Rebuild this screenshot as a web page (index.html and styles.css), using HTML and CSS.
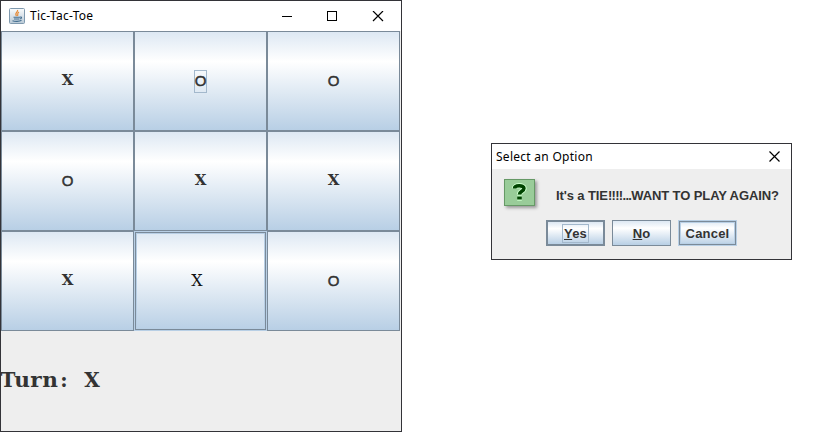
FILE: index.html
```html
<!DOCTYPE html>
<html lang="en">
<head>
<meta charset="utf-8">
<title>Tic-Tac-Toe</title>
<link rel="stylesheet" href="styles.css">
</head>
<body>
<main class="desktop">
  <section class="window game">
    <header class="titlebar">
      <svg class="java" width="16" height="16" viewBox="0 0 16 16">
        <defs><linearGradient id="jg" x2="0" y2="1"><stop stop-color="#fafcfd"/><stop offset="1" stop-color="#b9c9d6"/></linearGradient></defs>
        <rect x=".5" y=".5" width="15" height="15" rx="1" fill="url(#jg)" stroke="#7f99ae"/>
        <path d="M8.500 2C9.500 4 5 5 7.500 8M10 4C7.500 5.500 9.500 6 8.500 8" fill="none" stroke="#e78a35" stroke-width="1.200"/>
        <path d="M4.500 9.300h6M5 11h5M10.500 9.300c3-1 2.500 1.500 0 1.700M3.500 12.700c2 1 7 1 9-.4" fill="none" stroke="#456f90" stroke-width="1.100"/>
      </svg>
      <h1 class="title">Tic-Tac-Toe</h1>
      <svg class="controls" width="102" height="11" viewBox="0 0 102 11" fill="none" stroke="#000" shape-rendering="crispEdges">
        <path d="M0 5.500h10M45.500 .5h9v9h-9z"/>
        <path d="M91 0l10 10M101 0l-10 10" stroke-width="1.200" shape-rendering="auto"/>
      </svg>
    </header>
    <div class="board">
      <button class="cell"><span>X</span></button>
      <button class="cell"><span class="mark-o focus">O</span></button>
      <button class="cell"><span class="mark-o">O</span></button>
      <button class="cell"><span class="mark-o">O</span></button>
      <button class="cell"><span>X</span></button>
      <button class="cell"><span>X</span></button>
      <button class="cell"><span>X</span></button>
      <button class="cell hover"><span>X</span></button>
      <button class="cell"><span class="mark-o">O</span></button>
    </div>
    <p class="turn"><span>T</span><span class="low">u</span><span class="low">r</span><span class="low">n</span><span>:</span><span> </span><span>X</span></p>
  </section>
  <section class="window dialog">
    <header class="titlebar">
      <h2 class="title">Select an Option</h2>
      <svg class="close" width="11" height="11" viewBox="0 0 11 11" fill="none" stroke="#000" stroke-width="1.200"><path d="M.5 .5l10 10M10.500 .5l-10 10"/></svg>
    </header>
    <div class="message">
      <div class="question">
        <svg width="31" height="27" viewBox="0 0 31 27">
          <rect x=".5" y=".5" width="30" height="26" fill="#99cc99" stroke="#669966"/>
          <g fill="none">
            <path d="M10.500 9.500C10.500 5.800 20 5.800 20 9.300C20 12.500 15.500 12 15.500 15.500M13.200 19h4.600" stroke="#ccffcc" stroke-width="5.400"/>
            <path d="M10.500 9.500C10.500 5.800 20 5.800 20 9.300C20 12.500 15.500 12 15.500 15.500" stroke="#004400" stroke-width="3.500"/>
            <path d="M13.200 19h4.600" stroke="#004400" stroke-width="3"/>
          </g>
        </svg>
      </div>
      <p class="text">It's a TIE<span class="marks">!!!!...</span>WANT TO PLAY AGAIN?</p>
    </div>
    <div class="actions">
      <button class="action default"><span class="focus"><u>Y</u>es</span></button>
      <button class="action"><span><u>N</u>o</span></button>
      <button class="action hover"><span>Cancel</span></button>
    </div>
  </section>
</main>
</body>
</html>
```
FILE: styles.css
```css
* { box-sizing: border-box; }
body { margin: 0; background: #fff; }
.desktop { display: flex; align-items: flex-start; width: 826px; height: 435px; }
.window { border: 1px solid #333338; background: #eee; }
.game { width: 402px; height: 432px; }
.dialog { width: 301px; height: 117px; margin: 143px 0 0 89px; }
.titlebar { display: flex; align-items: center; background: #fff; color: #000; }
.title { margin: 0; padding-bottom: 1px; font: 12px "Noto Sans", sans-serif; letter-spacing: .27px; white-space: nowrap; }
.game .titlebar { height: 30px; padding: 0 17px 0 8px; }
.game .title { margin-left: 5px; }
.java { flex: none; }
.controls { margin-left: auto; }
.board { display: grid; grid-template: repeat(3, 100px) / repeat(3, 133px); width: 399px; }
button {
  display: flex; align-items: center; justify-content: center;
  padding: 0; border: 1px solid #7a8a99; border-radius: 0; color: #333;
  background: linear-gradient(#dde8f3, #fff 30%, #b8cfe5);
}
.cell { font: bold 15px "DejaVu Serif", serif; }
.cell span { width: 13px; height: 23px; display: flex; align-items: center; justify-content: center; border: 1px solid transparent; padding-bottom: 2px; }
.cell .mark-o { font: 15px "Liberation Sans", sans-serif; -webkit-text-stroke: .5px #333; padding-bottom: 1px; }
.cell .focus { border-color: #a3b8cc; }
.cell.hover { border: 1px solid #b8cfe5; box-shadow: inset 0 0 0 1px #7a8a99, inset 0 0 0 2px #b8cfe5; color: #111; font-size: 16px; font-weight: normal; padding-right: 7px; }
.turn { display: flex; margin: 0; height: 98px; align-items: center; font: bold 20px "DejaVu Serif", serif; color: #333; }
.turn span { width: 14px; display: flex; justify-content: center; }
.turn .low { transform: scaleX(1.08); }
.dialog .titlebar { height: 25px; padding: 0 11px 0 4px; justify-content: space-between; }
.message { display: flex; height: 51px; padding: 10px 0 0 12px; }
.question { width: 31px; height: 27px; box-shadow: 2px 2px 3px #999; }
.question svg { display: block; }
.text { margin: 9px 0 0 21px; font: bold 13px/16px "Liberation Sans", sans-serif; letter-spacing: -.1px; color: #333; white-space: nowrap; }
.marks { letter-spacing: -.7px; }
.actions { display: flex; gap: 7px; padding-left: 54px; }
.action { width: 59px; height: 26px; font: bold 13px "Liberation Sans", sans-serif; letter-spacing: .2px; }
.action.default { border-width: 2px; }
.action .focus { outline: 1px solid #a3b8cc; outline-offset: 1px; }
.action.hover { border-color: #b8cfe5; box-shadow: inset 0 0 0 1px #7a8a99, inset 0 0 0 2px #b8cfe5; }
```
